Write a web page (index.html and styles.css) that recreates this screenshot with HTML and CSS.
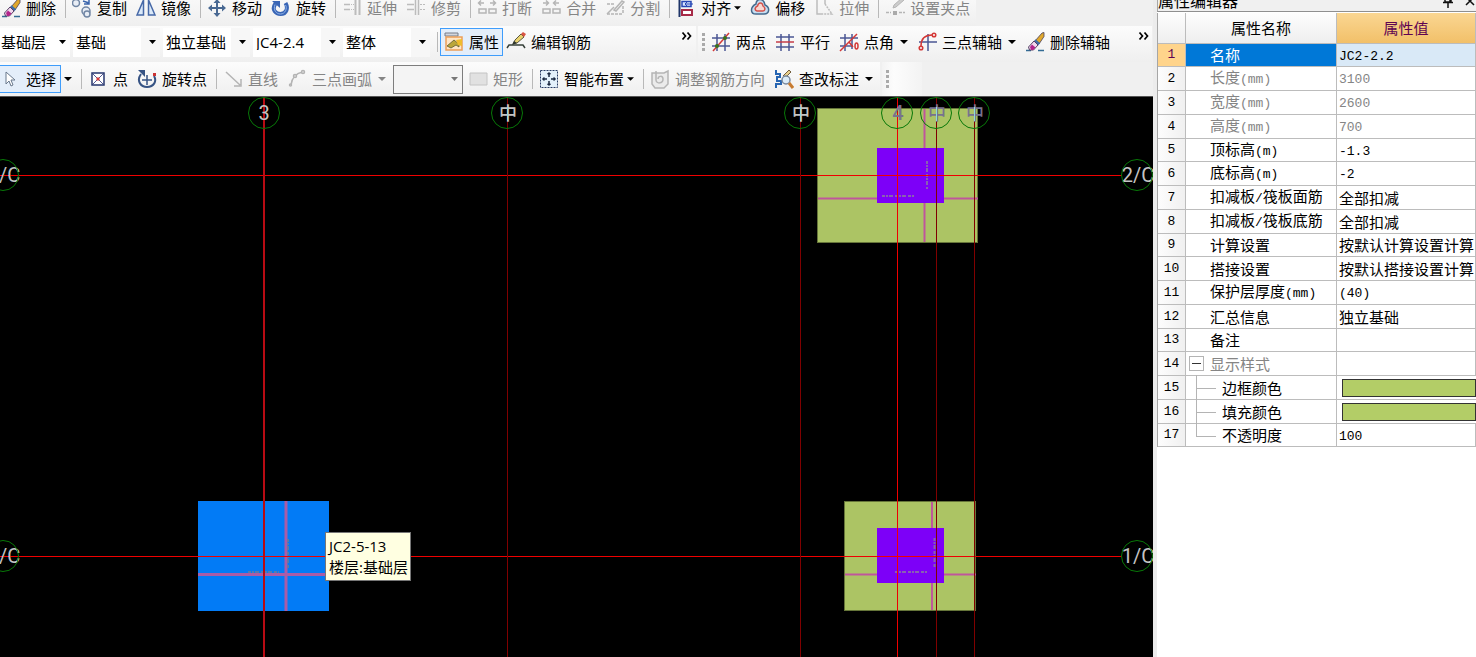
FILE: index.html
```html
<!DOCTYPE html>
<html lang="zh-CN">
<head>
<meta charset="utf-8">
<title>基础层 - 独立基础</title>
<link rel="stylesheet" href="styles.css">
</head>
<body>
<svg class="defs" aria-hidden="true">
  <symbol id="i-brush" viewBox="0 0 20 20">
    <path d="M1 18.500h5M13 18.500h6" stroke="#336b94" stroke-width="1.500"/>
    <path d="M10 9 17 1l2-.5v4L14 12z" fill="#e0a82c" stroke="#49405a" stroke-width=".8"/>
    <path d="M9.500 8.500 14 12.500" stroke="#3e6da5" stroke-width="3.500"/>
    <path d="M9 9 13 13 8.500 18H4.500L3.500 15z" fill="#f0d8ec" stroke="#574066"/>
    <path d="M7 12.500 10.500 15.500 8 18H6L5 15z" fill="#b3248c"/>
  </symbol>
  <symbol id="i-drop" viewBox="0 0 8 8"><path d="M0 2h8L4 6z" fill="currentColor"/></symbol>
  <symbol id="i-more" viewBox="0 0 12 10"><path d="M1.500 1.500 4.500 5l-3 3.500M6.500 1.500 9.500 5l-3 3.500" fill="none" stroke="#000" stroke-width="1.700"/></symbol>
</svg>
<div class="app">
  <main class="work">
    <div class="bars">
      <div class="bar bar-edit" role="toolbar" aria-label="修改">
        <button class="tool"><svg viewBox="0 0 20 20"><use href="#i-brush"/></svg>删除</button>
        <span class="sep"></span>
        <button class="tool"><svg viewBox="0 0 20 20" fill="#e8edf5" stroke="#7186a4" stroke-width="1.500"><circle cx="4" cy="5" r="3.500"/><circle cx="14" cy="13" r="4"/><circle cx="15" cy="16" r="3"/><path d="M11 3l6 2M17 1v5h-5" stroke="#3c66ad"/></svg>复制</button>
        <button class="tool"><svg viewBox="0 0 20 20" fill="#dbe9f8" stroke="#4668a7" stroke-width="1.500"><path d="M7.500 2v15H1zM12.500 2v15H19z"/></svg>镜像</button>
        <span class="sep"></span>
        <button class="tool"><svg viewBox="0 0 20 20"><path d="M10 3v14M3 10h14" stroke="#486892" stroke-width="2"/><path d="M6.500 5 10 1l3.500 4zM6.500 15l3.500 4 3.500-4zM5 6.500 1 10l4 3.500zM15 6.500l4 3.500-4 3.500z" fill="#486892"/></svg>移动</button>
        <button class="tool"><svg viewBox="0 0 20 20"><path d="M4.500 5.500C0 12 5 16 9.500 16c6 0 8-6 5-11" fill="none" stroke="#3965b5" stroke-width="4"/><path d="M4 6.500C2 12 5 16 9.500 16c5 0 7-6 5-9" fill="none" stroke="#8fb2e8"/><path d="M1 3h8v7z" fill="#3965b5"/></svg>旋转</button>
        <span class="sep"></span>
        <button class="tool" disabled><svg viewBox="0 0 20 20" fill="none" stroke="#bcbcbc"><path d="M2 6.500h6M2 11.500h6" stroke-width="1.500"/><path d="M9 6.500h3M9 11.500h3" stroke-dasharray="1 1"/><path d="M13.500 1v16M17.500 1v16" stroke-width="2"/></svg>延伸</button>
        <button class="tool" disabled><svg viewBox="0 0 20 20" fill="none" stroke="#bcbcbc"><path d="M1 6.500h7M1 11.500h7" stroke-width="1.500"/><path d="M14 6.500h6M14 11.500h6" stroke-dasharray="2 1"/><path d="M9.500 1v16M12.500 1v16" stroke-width="1.500"/></svg>修剪</button>
        <span class="sep"></span>
        <button class="tool" disabled><svg viewBox="0 0 20 20" fill="none" stroke="#b5b5b5" stroke-width="1.500"><path d="M2 5h5M13 5h5M4 2.500 1.500 5 4 7.500M16 2.500 18.500 5 16 7.500"/><path d="M2 11h7v4H2zM12 11h7v4h-7z"/></svg>打断</button>
        <button class="tool" disabled><svg viewBox="0 0 20 20" fill="none" stroke="#b5b5b5" stroke-width="1.500"><path d="M2 5h5M13 5h5M5 2.500 7.500 5 5 7.500M15 2.500 12.500 5 15 7.500"/><path d="M2 11h7v4H2zM12 11h7v4h-7z"/></svg>合并</button>
        <button class="tool" disabled><svg viewBox="0 0 20 20" fill="none" stroke="#b5b5b5" stroke-width="1.500"><path d="M2 6h8M2 16h16M18 8v8" stroke-dasharray="3 1"/><path d="M2 16 9 9M9 12 17 3l2 1-8 9z"/></svg>分割</button>
        <span class="sep"></span>
        <button class="tool"><svg viewBox="0 0 20 20" fill="none"><path d="M3.500 0v19" stroke="#203669" stroke-width="2"/><path d="M6 3.500h9v5H6z" fill="#d8e5ff" stroke="#2748b4" stroke-width="1.500"/><path d="M6 12h10v5H6z" fill="#fff" stroke="#a62a47" stroke-width="2"/><path d="M17 6H9M12 3 9 6l3 3" stroke="#2748b4"/></svg>对齐<svg class="drop tight"><use href="#i-drop"/></svg></button>
        <button class="tool"><svg viewBox="0 0 20 20"><path d="M6 6C6 0 14 0 15 7c5 2 5 9-1 9H6C0 16 0 9 6 6z" fill="#c8def1" stroke="#456b8e" stroke-width="1.500"/><path d="M7.500 8c1-4 5-4 5.500 0 3 2 2 5 0 5H7c-3-1-2-4 .500-5z" fill="#f8d8d3" stroke="#d4524b" stroke-width="1.500"/></svg>偏移</button>
        <button class="tool" disabled><svg viewBox="0 0 20 20" fill="none" stroke="#bdbdbd" stroke-width="1.500"><path d="M9 16H3V1h8v5"/><path d="m11 6 7 10h-9" stroke-dasharray="2 1"/></svg>拉伸</button>
        <span class="sep"></span>
        <button class="tool" disabled><svg viewBox="0 0 20 20"><path d="M1 14.500h5M14 14.500h6" stroke="#b5b5b5" stroke-width="1.500" stroke-dasharray="3 1"/><path d="M8 13h4v4H8z" fill="#aaa"/><path d="m8 10 1-3 8-7 2 2-8 7z" fill="#ccc" stroke="#b5b5b5"/></svg>设置夹点</button>
      </div>

      <div class="bar-row">
        <div class="bar bar-member" role="toolbar" aria-label="构件">
          <select class="combo first" aria-label="楼层"><option>基础层</option></select>
          <select class="combo" aria-label="构件大类"><option>基础</option></select>
          <select class="combo" aria-label="构件类型"><option>独立基础</option></select>
          <select class="combo" aria-label="构件名称"><option>JC4-2.4</option></select>
          <select class="combo" aria-label="显示范围"><option>整体</option></select>
          <span class="sep"></span>
          <button class="tool on props"><svg viewBox="0 0 20 20"><path d="M1 1h13v3H1z" fill="#d2d6de" stroke="#777d89"/><path d="M2 5h16v13H2z" fill="#ffe5c4" stroke="#ec9f58" stroke-width="1.500"/><path d="m3 14 7-6 5 4v3l-3-2-5 3z" fill="#baa63a" stroke="#5d5a2e" stroke-width=".8"/><path d="m12 8 6-1v7l-4-1z" fill="#efbc2d"/></svg>属性</button>
          <button class="tool rebar"><svg viewBox="0 0 20 20" fill="none"><path d="M1 16l2-3h14l2 3" stroke="#37413a" stroke-width="1.500"/><path d="m7 12 2-4 6-6 3 3-7 6z" fill="#ead370" stroke="#5b5940"/><path d="m15 2 2-2 3 2-2 3z" fill="#d95543"/><path d="m6 13 2-4 3 2z" fill="#2f372f"/></svg>编辑钢筋</button>
          <button class="more" aria-label="更多构件工具"><svg><use href="#i-more"/></svg></button>
        </div>
        <div class="bar bar-axis" role="toolbar" aria-label="辅轴">
          <span class="grip"></span>
          <button class="tool"><svg viewBox="0 0 20 20"><path d="M6 2v17M14 2v17M1 6h18M1 14h18" stroke="#4b5794" stroke-width="1.500"/><path d="M2 19 18 1" stroke="#d43836" stroke-width="1.500"/><circle cx="6" cy="14" r="2" fill="#39721c"/><circle cx="14" cy="6" r="2" fill="#39721c"/></svg>两点</button>
          <button class="tool"><svg viewBox="0 0 20 20"><path d="M6 2v17M14 2v17M1 5h18M1 15h18" stroke="#4b5794" stroke-width="1.500"/><path d="M1 10h18" stroke="#c53c49" stroke-width="1.500"/></svg>平行</button>
          <button class="tool"><svg viewBox="0 0 20 20" fill="none"><path d="M6 2v17M13 2v15M1 6h18M1 14h13" stroke="#4b5794" stroke-width="1.500"/><path d="M1 19 18 2M10 10l4 5" stroke="#d43836" stroke-width="1.500"/><ellipse cx="17.500" cy="14" rx="1.500" ry="3" stroke="#d43836" stroke-width="1.500"/></svg>点角<svg class="drop"><use href="#i-drop"/></svg></button>
          <button class="tool"><svg viewBox="0 0 20 20" fill="none"><path d="M11 2v17M2 10h18" stroke="#4b5794" stroke-width="1.500"/><path d="M4 14C4 7 8 3 15 3" stroke="#d43836" stroke-width="1.500"/><circle cx="17" cy="3" r="1.800" stroke="#d43836" stroke-width="1.500"/><circle cx="4" cy="16" r="1.800" stroke="#d43836" stroke-width="1.500"/></svg>三点辅轴<svg class="drop"><use href="#i-drop"/></svg></button>
          <button class="tool"><svg viewBox="0 0 20 20"><use href="#i-brush"/></svg>删除辅轴</button>
          <button class="more" aria-label="更多辅轴工具"><svg><use href="#i-more"/></svg></button>
        </div>
      </div>

      <div class="bar-row">
        <div class="bar bar-draw" role="toolbar" aria-label="绘图">
          <button class="tool on select"><svg viewBox="0 0 20 20"><path d="M5 3v12l3-3 2 5 2-1-2-5h4z" fill="#fff" stroke="#68788d"/></svg>选择</button>
          <button class="tool only" aria-label="选择方式"><svg class="drop"><use href="#i-drop"/></svg></button>
          <span class="sep"></span>
          <button class="tool"><svg viewBox="0 0 20 20"><path d="M4 4h12v12H4z" fill="#fff" stroke="#26366e" stroke-width="1.500"/><path d="m5 5 10 10M15 5 5 15" stroke="#525993"/><path d="M8.500 8.500h3v3h-3z" fill="#d63a3a"/></svg>点</button>
          <button class="tool"><svg viewBox="0 0 20 20" fill="none"><path d="M4 5C-1 12 4 18 10 18c7 0 10-6 7-11" stroke="#365384" stroke-width="2"/><path d="M1 1h7v7z" fill="#365384"/><path d="M5 11h10M10 6v10" stroke="#365384" stroke-width="1.500"/><path d="M16 4h3v3h-3z" fill="#c33"/></svg>旋转点</button>
          <span class="sep"></span>
          <button class="tool" disabled><svg viewBox="0 0 20 20"><path d="m3 3 14 13M11 17h7v-7" fill="none" stroke="#b4b4b4" stroke-width="1.500"/></svg>直线</button>
          <button class="tool" disabled><svg viewBox="0 0 20 20" fill="#eee" stroke="#b4b4b4" stroke-width="1.500"><path d="M4 16C5 9 9 4 16 3" fill="none"/><circle cx="3.500" cy="16" r="1"/><circle cx="8" cy="7" r="1.500"/><circle cx="16" cy="3" r="1.500"/></svg>三点画弧<svg class="drop"><use href="#i-drop"/></svg></button>
          <select class="combo framed" aria-label="画弧方式" disabled><option></option></select>
          <button class="tool" disabled><svg viewBox="0 0 20 20"><path d="M2 4h17v12H2z" fill="#e1e1e1" stroke="#c4c4c4"/></svg>矩形</button>
          <span class="sep"></span>
          <button class="tool"><svg viewBox="0 0 20 20"><path d="M1.500 1.500h17v17h-17z" fill="#e3f0fb" stroke="#263a64" stroke-dasharray="2 1"/><path d="M10 4v4M10 12v4M4 10h4M12 10h4" stroke="#182640" stroke-width="1.500"/><path d="M8.500 5 10 3.500 11.500 5zM8.500 15l1.500 1.500 1.500-1.500zM5 8.500 3.500 10 5 11.500zM15 8.500l1.500 1.500-1.500 1.500z" fill="#182640" stroke="#182640"/></svg>智能布置<svg class="drop tight"><use href="#i-drop"/></svg></button>
          <span class="sep"></span>
          <button class="tool" disabled><svg viewBox="0 0 20 20" fill="none" stroke="#b5b5b5" stroke-width="1.500"><path d="M2 4h12l4-2v13l-4 4H5l-3-4z" fill="#ebebeb"/><path d="M6 6v5c0 4 7 4 7-1 0-4-5-3-5 0M6 2v5"/></svg>调整钢筋方向</button>
          <button class="tool"><svg viewBox="0 0 20 20" fill="none"><path d="M2 1v4h4v3H3v4h4v3H2v4" stroke="#2765b2" stroke-width="2"/><path d="m9 7 6-6 2 2-6 6" fill="#e8cf8b" stroke="#725e3c"/><circle cx="12" cy="11" r="4" fill="#dcecf9" stroke="#78889c" stroke-width="1.500"/><path d="m15 14 4 5" stroke="#c77b30" stroke-width="3"/></svg>查改标注<svg class="drop"><use href="#i-drop"/></svg></button>
        </div>
        <div class="bar bar-blank"><span class="grip"></span></div>
      </div>
    </div>

    <div class="stage">
      <svg class="drawing" role="img" aria-label="独立基础平面图">
        <g fill="#acc464" stroke="#667539">
          <rect x="817.500" y="11.500" width="160" height="134"/>
          <rect x="844.500" y="404.500" width="131" height="109"/>
        </g>
        <rect x="198" y="404" width="131" height="110" fill="#027bf6"/>
        <g stroke="#bf569b" stroke-width="2">
          <path d="M924.500 12v133M818 101.500h160M932 405v108M845 477.500h131"/>
          <path d="M286 404v110M198 477.500h131" stroke="#aa5ca7" stroke-width="3"/>
        </g>
        <g fill="#7d00f8">
          <rect x="877" y="51" width="67" height="55"/>
          <rect x="877" y="431" width="67" height="55"/>
        </g>
        <g stroke="#8c78a0" stroke-width="2" stroke-dasharray="3 1 2 1 4 2" opacity=".8">
          <path d="M882 99h32M927 64v28M895 475h32M934.500 441v30"/>
          <path d="M248 475h31M288 442v30" stroke="#697b9b"/>
        </g>
        <g class="lines">
          <rect class="red" x="0" y="78" width="1122" height="1"/>
          <rect class="red" x="0" y="459" width="1122" height="1"/>
          <rect class="deep" x="263" y="0" width="2" height="100%"/>
          <rect class="red" x="897" y="0" width="1" height="100%"/>
          <rect class="dark" x="507" y="0" width="1" height="100%"/>
          <rect class="dark" x="800" y="0" width="1" height="100%"/>
          <rect class="dark" x="936" y="0" width="1" height="100%"/>
          <rect class="dark" x="974" y="0" width="1" height="100%"/>
        </g>
        <g class="axis-text" text-anchor="middle">
          <text x="264" y="23">3</text>
          <text class="over" x="898" y="23">4</text>
          <text class="mid" x="508" y="23">中</text>
          <text class="mid" x="801" y="23">中</text>
          <text class="mid over" x="937" y="23">中</text>
          <text class="mid over" x="975" y="23">中</text>
          <text x="4" y="85">2/C</text>
          <text x="1138" y="85">2/C</text>
          <text x="4" y="466">1/C</text>
          <text x="1138" y="466">1/C</text>
        </g>
        <g fill="#8ed9dc">
          <rect x="507" y="10" width="1" height="14"/>
          <rect x="800" y="10" width="1" height="14"/>
          <rect x="936" y="10" width="1" height="14"/>
          <rect x="974" y="10" width="1" height="14"/>
        </g>
        <g fill="none" stroke="#087808">
          <circle cx="264" cy="16" r="15.500"/><circle cx="507" cy="16" r="15.500"/><circle cx="800" cy="16" r="15.500"/>
          <circle cx="897" cy="16" r="15.500"/><circle cx="936" cy="16" r="15.500"/><circle cx="974" cy="16" r="15.500"/>
          <circle cx="3" cy="78" r="15.500"/><circle cx="1137" cy="78" r="15.500"/>
          <circle cx="3" cy="459" r="15.500"/><circle cx="1137" cy="459" r="15.500"/>
        </g>
      </svg>
      <div class="tip" role="tooltip">JC2-5-13<br>楼层:基础层</div>
    </div>
  </main>

  <aside class="panel">
    <header class="panel-title">
      <h2>属性编辑器</h2>
      <button aria-label="固定"><svg viewBox="0 0 12 14"><path d="M3 1v7h6V1zM1 8.500h10M6 9v5M8 1v7" fill="none" stroke="#111" stroke-width="1.500"/></svg></button>
      <button aria-label="关闭"><svg viewBox="0 0 12 14"><path d="m2 3 8 8M10 3l-8 8" stroke="#111" stroke-width="1.500"/></svg></button>
    </header>
    <table class="grid">
      <colgroup><col class="c-no"><col class="c-name"><col></colgroup>
      <thead><tr><th></th><th>属性名称</th><th class="hot">属性值</th></tr></thead>
      <tbody>
        <tr class="sel"><th>1</th><td>名称</td><td><span class="lat">JC2-2.2</span></td></tr>
        <tr class="dim"><th>2</th><td>长度<span class="lat">(mm)</span></td><td><span class="lat">3100</span></td></tr>
        <tr class="dim"><th>3</th><td>宽度<span class="lat">(mm)</span></td><td><span class="lat">2600</span></td></tr>
        <tr class="dim"><th>4</th><td>高度<span class="lat">(mm)</span></td><td><span class="lat">700</span></td></tr>
        <tr><th>5</th><td>顶标高<span class="lat">(m)</span></td><td><span class="lat">-1.3</span></td></tr>
        <tr><th>6</th><td>底标高<span class="lat">(m)</span></td><td><span class="lat">-2</span></td></tr>
        <tr><th>7</th><td>扣减板<span class="lat">/</span>筏板面筋</td><td>全部扣减</td></tr>
        <tr><th>8</th><td>扣减板<span class="lat">/</span>筏板底筋</td><td>全部扣减</td></tr>
        <tr><th>9</th><td>计算设置</td><td>按默认计算设置计算</td></tr>
        <tr><th>10</th><td>搭接设置</td><td>按默认搭接设置计算</td></tr>
        <tr><th>11</th><td>保护层厚度<span class="lat">(mm)</span></td><td><span class="lat">(40)</span></td></tr>
        <tr><th>12</th><td>汇总信息</td><td>独立基础</td></tr>
        <tr><th>13</th><td>备注</td><td></td></tr>
        <tr class="dim group"><th>14</th><td><button class="fold" aria-label="折叠显示样式"></button>显示样式</td><td></td></tr>
        <tr class="child"><th>15</th><td>边框颜色</td><td class="color"><button class="swatch" aria-label="边框颜色"></button></td></tr>
        <tr class="child"><th>16</th><td>填充颜色</td><td class="color"><button class="swatch" aria-label="填充颜色"></button></td></tr>
        <tr class="child last"><th>17</th><td>不透明度</td><td><span class="lat">100</span></td></tr>
      </tbody>
    </table>
  </aside>
</div>
</body>
</html>
```
FILE: styles.css
```css
* { box-sizing: border-box; }

body {
  margin: 0;
  background: #f0f0f0;
  color: #000;
  font: 15px/16px "Open Sans", "Noto Sans CJK SC", sans-serif;
  overflow: hidden;
}

button, select {
  margin: 0;
  padding: 0;
  border: 0;
  background: none;
  color: inherit;
  font: inherit;
}

.defs { position: absolute; width: 0; height: 0; }

.app { display: flex; height: 100vh; }

.work {
  flex: 1;
  min-width: 0;
  display: flex;
  flex-direction: column;
  overflow: hidden;
}

/* toolbars */
.bars { border-bottom: 1px solid #555; }
.bar-row { display: flex; gap: 2px; height: 36px; }
.bar-row:last-child { height: 34px; }

.bar {
  display: flex;
  align-items: center;
  gap: 9px;
  background: linear-gradient(#fcfcfc, #efefef);
  white-space: nowrap;
}

.bar-edit {
  width: 976px;
  height: 26px;
  padding: 0 0 10px 1px;
  background: linear-gradient(#f8f8f8, #efefef);
}

.tool {
  display: flex;
  flex: none;
  align-items: center;
  gap: 5px;
  height: 28px;
}
.tool svg { width: 20px; height: 20px; flex: none; }
.tool:disabled { color: #858585; }
.tool .drop { width: 8px; height: 8px; margin-left: 1px; }
.tool .drop.tight { width: 7px; margin-left: -2px; }
.tool.on { background: #e4eefa; border: 1px solid #3f9dfb; }

.sep {
  flex: none;
  width: 1px;
  height: 20px;
  margin-right: -3px;
  background: #b8b8b8;
}

.grip {
  flex: none;
  width: 3px;
  height: 18px;
  background: repeating-linear-gradient(#aaa 0 3px, transparent 3px 5px);
}

.more { align-self: flex-start; height: 20px; flex: none; }
.more svg { display: block; width: 12px; height: 10px; }

.bar-member { width: 696px; gap: 3px; padding-bottom: 4px; }
.bar-member .sep { margin: 0; margin-left: 4px; }
.bar-member .more { margin-left: auto; margin-right: 3px; }
.tool.props { margin-left: -1px; padding: 0 4px 0 3px; width: 63px; }
.bar-axis { width: 454px; padding: 0 2px 4px 4px; }
.bar-axis .grip { margin-right: -3px; }
.bar-axis .more { margin-left: auto; }

.combo {
  flex: none;
  width: 87px;
  height: 29px;
  padding-left: 3px;
  border-radius: 0;
  appearance: none;
  background:
    url("data:image/svg+xml,%3Csvg xmlns='http://www.w3.org/2000/svg' width='7' height='4'%3E%3Cpath d='M0 0h7L3.500 4z'/%3E%3C/svg%3E") right 4px center no-repeat,
    linear-gradient(90deg, transparent 0 68px, #f7f7f7 68px) no-repeat,
    #fff;
}
.combo.first { width: 70px; padding-left: 1px; background-size: auto, 0 0, auto; }
.combo.framed {
  width: 70px;
  height: 29px;
  margin-left: -2px;
  margin-right: -4px;
  border: 1px solid #7d7d7d;
  background:
    url("data:image/svg+xml,%3Csvg xmlns='http://www.w3.org/2000/svg' width='7' height='4'%3E%3Cpath d='M0 0h7L3.500 4z' fill='%23777'/%3E%3C/svg%3E") right 4px center no-repeat,
    #f4f4f4;
  opacity: 1;
}

.bar-draw { width: 880px; }
.tool.select { width: 61px; border-left: 0; margin-right: -8px; padding-left: 1px; }
.tool.only .drop { margin-left: 2px; }
.bar-blank { width: 40px; padding-left: 4px; background: linear-gradient(90deg, #f3f3f3, #fcfcfc 30%, #f3f3f3); }

/* drawing area */
.stage { position: relative; flex: 1; min-height: 0; background: #000; overflow: hidden; }
.drawing { display: block; width: 100%; height: 100%; }
.lines .red { fill: #f00000; }
.lines .deep { fill: #b80b13; }
.lines .dark { fill: #800000; }
.axis-text { font-family: Roboto, "Noto Sans CJK SC", sans-serif; font-size: 20px; fill: #c4c4c4; }
.axis-text .mid { font-size: 18px; font-weight: 500; }
.axis-text .over { fill: #77728e; font-weight: 500; }

.tip {
  position: absolute;
  left: 325px;
  top: 435px;
  padding: 3px 2px 2px 3px;
  border: 1px solid #767676;
  background: #ffffe1;
  line-height: 21px;
  white-space: nowrap;
}

/* property panel */
.panel {
  flex: 0 0 323px;
  display: flex;
  flex-direction: column;
  overflow: hidden;
  border-left: 4px solid #ececec;
  background: #fff;
}
.panel-title {
  display: flex;
  align-items: center;
  gap: 10px;
  height: 20px;
  margin-top: -8px;
  padding-bottom: 1px;
  background: #f0f0f0;
  border-bottom: 1px solid #8f8f8f;
  border-left: 1px solid #a6a6a6;
}
.panel-title h2 { flex: 1; margin: 0; font-size: 16px; line-height: 18px; font-weight: 400; }
.panel-title button svg { display: block; width: 12px; height: 14px; }

.grid {
  width: 100%;
  margin-top: 1px;
  border-left: 1px solid #a6a6a6;
  border-spacing: 0;
  table-layout: fixed;
}
.c-no { width: 28px; }
.c-name { width: 151px; }

.grid th, .grid td {
  position: relative;
  height: 24px;
  padding: 0 0 0 2px;
  border-right: 1px solid #bcbcbc;
  border-bottom: 1px solid #bcbcbc;
  font-weight: 400;
  text-align: left;
  white-space: nowrap;
}
.grid tbody tr:nth-child(4n + 1) > * { height: 23px; }
.grid thead th {
  height: 31px;
  padding: 0;
  text-align: center;
  background: linear-gradient(#fdfdfd, #eee);
}
.grid thead .hot { background: linear-gradient(#fad692, #f2c069); color: #5f0452; }
.grid tbody th {
  padding: 0;
  text-align: center;
  background: linear-gradient(90deg, #fdfdfd, #f0f0f0);
  font: 13px/16px "Liberation Mono", monospace;
}
.grid tbody td:nth-child(2) { padding-left: 24px; }
.grid .lat { font: 13px/16px "Liberation Mono", monospace; }
.grid .dim td { color: #858585; }
.grid .sel th { background: #ffd48b; color: #5f0452; }
.grid .sel td:nth-child(2) { background: #0078d7; color: #fff; }
.grid .sel td:nth-child(3) { background: #d9e9f7; }

.fold {
  position: absolute;
  left: 3px;
  top: 4px;
  width: 15px;
  height: 15px;
  border: 1px solid #b4b4b4;
  background: linear-gradient(#333, #333) center / 9px 1px no-repeat #fff;
}
.grid .child td:nth-child(2) { padding-left: 36px; }
.child td:nth-child(2)::before {
  content: "";
  position: absolute;
  left: 10px;
  top: -1px;
  width: 1px;
  height: 25px;
  background: #b4b4b4;
}
.child.last td:nth-child(2)::before { height: 13px; }
.child td:nth-child(2)::after {
  content: "";
  position: absolute;
  left: 10px;
  top: 12px;
  width: 20px;
  height: 1px;
  background: #b4b4b4;
}
.grid .color { padding: 0 0 0 5px; border-right: 0; }
.swatch {
  display: block;
  width: 100%;
  height: 18px;
  border: 1px solid #333;
  background: #b3cd67;
}
```
